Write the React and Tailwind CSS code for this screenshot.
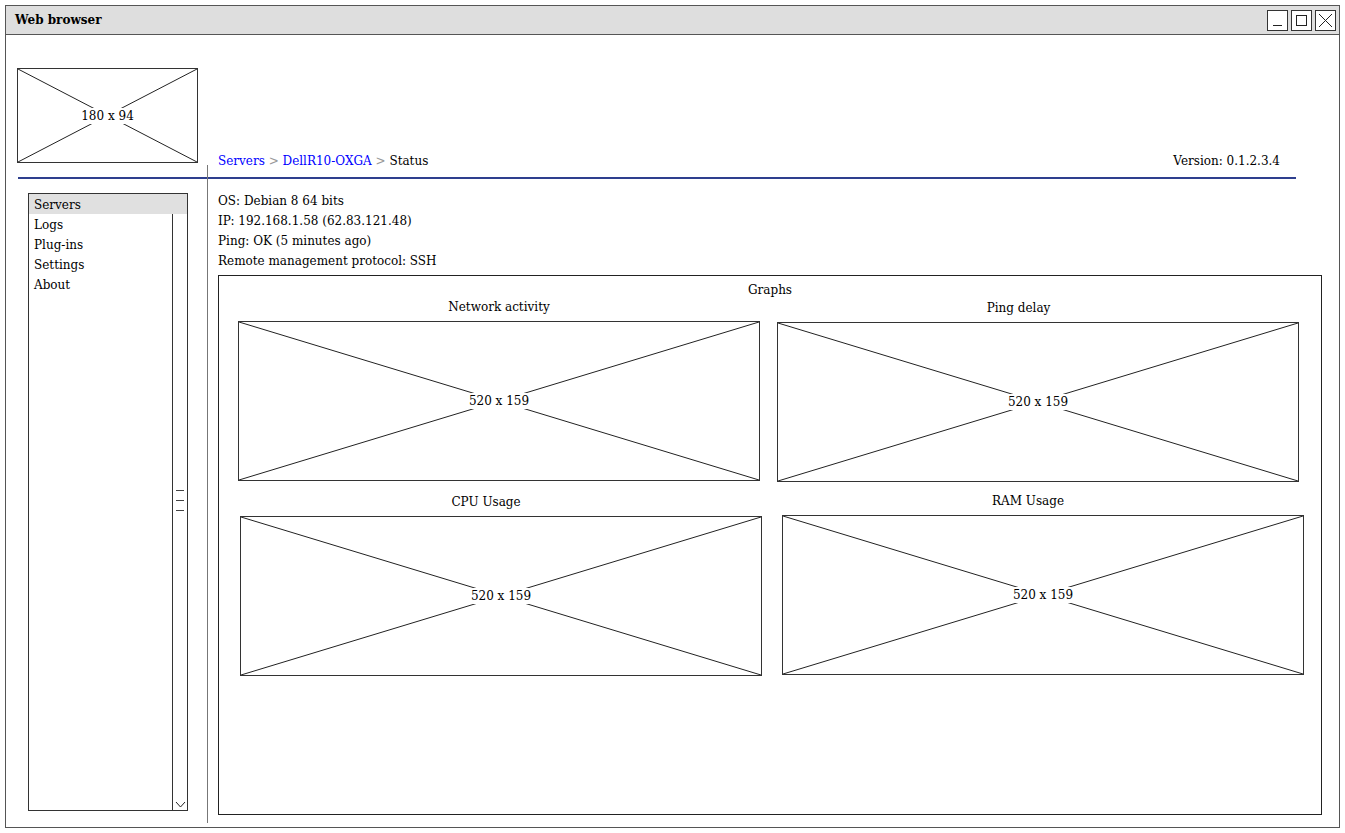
import React from "react";

const font = { fontFamily: '"DejaVu Serif", "Liberation Serif", serif' };

function Placeholder({ label, className }) {
  return (
    <div className={`relative border border-[#333] bg-white ${className}`}>
      <svg className="absolute inset-0 h-full w-full" viewBox="0 0 100 100" preserveAspectRatio="none">
        <line x1="0" y1="0" x2="100" y2="100" stroke="#222" strokeWidth="1" vectorEffect="non-scaling-stroke" />
        <line x1="100" y1="0" x2="0" y2="100" stroke="#222" strokeWidth="1" vectorEffect="non-scaling-stroke" />
      </svg>
      <div className="absolute inset-0 flex items-center justify-center">
        <span className="bg-white px-[6px] text-[12px] leading-[16px] text-black">{label}</span>
      </div>
    </div>
  );
}

function Chart({ title, className, titleClass = "" }) {
  return (
    <div className={`flex flex-col items-center ${className}`}>
      <div className={`text-[12px] leading-[20px] ${titleClass}`}>{title}</div>
      <Placeholder label="520 x 159" className="mt-[4px] h-[160px] w-[522px]" />
    </div>
  );
}

export default function App() {
  const menu = ["Logs", "Plug-ins", "Settings", "About"];
  const info = [
    "OS: Debian 8 64 bits",
    "IP: 192.168.1.58 (62.83.121.48)",
    "Ping: OK (5 minutes ago)",
    "Remote management protocol: SSH",
  ];

  return (
    <div className="h-[833px] w-[1345px] bg-white p-[5px] text-black" style={font}>
      <div className="flex h-full flex-col border border-[#555]">
        {/* title bar */}
        <div className="flex h-[29px] items-center justify-between border-b border-[#555] bg-[#dedede] pl-[9px] pr-[3px]">
          <span className="text-[12px] font-bold">Web browser</span>
          <div className="flex gap-[3px]">
            <div className="flex h-[21px] w-[21px] items-end justify-center border border-[#333] bg-white pb-[4px]">
              <div className="h-px w-[9px] bg-[#222]" />
            </div>
            <div className="flex h-[21px] w-[21px] items-center justify-center border border-[#333] bg-white">
              <div className="h-[11px] w-[11px] border border-[#222]" />
            </div>
            <div className="flex h-[21px] w-[21px] items-center justify-center border border-[#333] bg-white">
              <svg width="15" height="15" viewBox="0 0 15 15">
                <path d="M1 1 L14 14 M14 1 L1 14" stroke="#222" strokeWidth="1" fill="none" />
              </svg>
            </div>
          </div>
        </div>

        <div className="flex flex-1">
          {/* left column */}
          <div className="flex w-[201px] flex-col">
            <Placeholder label="180 x 94" className="ml-[11px] mt-[33px] h-[95px] w-[181px]" />
            <div className="ml-[12px] mt-[14px] h-[2px] bg-[#2e3f8e]" />
            <div className="ml-[22px] mt-[14px] flex h-[618px] w-[160px] flex-col border border-[#333] text-[12px]">
              <div className="h-[20px] bg-[#e0e0e0] pl-[5px] pt-px leading-[20px]">Servers</div>
              <div className="flex flex-1">
                <div className="flex-1 pl-[5px] pt-px">
                  {menu.map((m) => (
                    <div key={m} className="leading-[20px]">{m}</div>
                  ))}
                </div>
                <div className="flex w-[15px] flex-col items-center border-l border-[#333]">
                  <div className="mt-[276px] flex flex-col gap-[9px]">
                    <div className="h-px w-[8px] bg-[#444]" />
                    <div className="h-px w-[8px] bg-[#444]" />
                    <div className="h-px w-[8px] bg-[#444]" />
                  </div>
                  <svg className="mt-auto mb-[2px]" width="11" height="7" viewBox="0 0 11 7">
                    <path d="M1 1 L5.5 6 L10 1" stroke="#222" strokeWidth="1" fill="none" />
                  </svg>
                </div>
              </div>
            </div>
          </div>

          {/* divider */}
          <div className="mb-[4px] mt-[130px] w-px bg-[#777]" />

          {/* right column */}
          <div className="flex flex-1 flex-col">
            <div className="mt-[116px] flex justify-between pl-[10px] pr-[59px] text-[12px] leading-[20px]">
              <div>
                <span className="text-[#0000ff]">Servers</span>
                <span className="text-[#999]"> &gt; </span>
                <span className="text-[#0000ff]">DellR10-OXGA</span>
                <span className="text-[#999]"> &gt; </span>
                <span>Status</span>
              </div>
              <div>Version: 0.1.2.3.4</div>
            </div>
            <div className="mr-[43px] mt-[6px] h-[2px] bg-[#2e3f8e]" />

            <div className="mt-[12px] pl-[10px] text-[12px] leading-[20px]">
              {info.map((t) => (
                <div key={t}>{t}</div>
              ))}
            </div>

            <div className="ml-[10px] mt-[4px] flex h-[540px] w-[1104px] flex-col border border-[#222]">
              <div className="mt-[4px] text-center text-[12px] leading-[20px]">Graphs</div>
              <div className="mt-[-3px] flex">
                <Chart title="Network activity" className="ml-[19px]" />
                <Chart title="Ping delay" className="ml-[17px] mt-[1px]" titleClass="mr-[39px]" />
              </div>
              <div className="mt-[10px] flex">
                <Chart title="CPU Usage" className="ml-[21px]" titleClass="mr-[30px]" />
                <Chart title="RAM Usage" className="ml-[20px] mt-[-1px]" titleClass="mr-[30px]" />
              </div>
            </div>
          </div>
        </div>
      </div>
    </div>
  );
}
